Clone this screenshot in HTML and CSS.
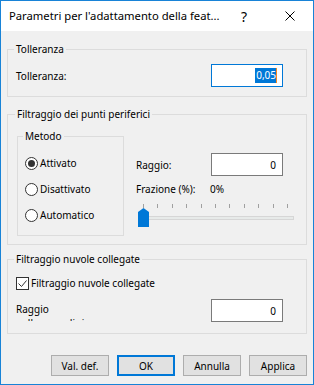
FILE: index.html
```html
<!DOCTYPE html>
<html lang="it">
<head>
    <meta charset="UTF-8">
    <title>Parametri per l'adattamento della feature</title>
    <link rel="stylesheet" href="styles.css">
</head>
<body>
    <div class="window">
        <div class="titlebar">
            <span class="title">Parametri per l'adattamento della feat...</span>
            <span class="caption-btn help">?</span>
            <span class="caption-btn close">
                <svg width="10" height="10" viewBox="0 0 10 10"><path d="M0.5 0.5L9.5 9.5M9.5 0.5L0.5 9.5" stroke="#000" stroke-width="1" fill="none"/></svg>
            </span>
        </div>

        <div class="content">
            <!-- Tolleranza -->
            <fieldset class="group group-tol">
                <legend>Tolleranza</legend>
                <div class="row">
                    <span class="label">Tolleranza:</span>
                    <div class="field focused"><span class="sel">0,05</span><span class="caret"></span></div>
                </div>
            </fieldset>

            <!-- Punti periferici -->
            <fieldset class="group group-outlier">
                <legend>Filtraggio dei punti periferici</legend>
                <div class="split">
                    <fieldset class="group group-method">
                        <legend>Metodo</legend>
                        <div class="radio checked"><span class="radio-circle"></span>Attivato</div>
                        <div class="radio"><span class="radio-circle"></span>Disattivato</div>
                        <div class="radio"><span class="radio-circle"></span>Automatico</div>
                    </fieldset>
                    <div class="right-col">
                        <div class="row">
                            <span class="label">Raggio:</span>
                            <div class="field">0</div>
                        </div>
                        <div class="fraction">
                            <span class="fraction-label">Frazione (%):</span>
                            <span>0%</span>
                        </div>
                        <div class="slider">
                            <div class="ticks">
                                <span></span><span></span><span></span><span></span><span></span><span></span>
                                <span></span><span></span><span></span><span></span><span></span>
                            </div>
                            <div class="track"></div>
                            <svg class="thumb" width="11" height="19" viewBox="0 0 11 19"><polygon points="0,4 5.5,0 11,4 11,19 0,19" fill="#0078d7"/></svg>
                        </div>
                    </div>
                </div>
            </fieldset>

            <!-- Nuvole collegate -->
            <fieldset class="group group-clouds">
                <legend>Filtraggio nuvole collegate</legend>
                <div class="check">
                    <span class="check-box">
                        <svg width="11" height="11" viewBox="0 0 11 11"><path d="M1.5 5.5L4.5 8.5L9.5 2.5" stroke="#333" stroke-width="1" fill="none"/></svg>
                    </span>
                    Filtraggio nuvole collegate
                </div>
                <div class="row row-top">
                    <span class="label clipped">Raggio<br>nella zona di ricerca</span>
                    <div class="field">0</div>
                </div>
            </fieldset>
        </div>

        <div class="buttons">
            <button>Val. def.</button>
            <button class="default">OK</button>
            <button>Annulla</button>
            <button>Applica</button>
        </div>
    </div>
</body>
</html>
```

FILE: styles.css
```css
* {
    box-sizing: border-box;
}

body {
    margin: 0;
    font-family: "Noto Sans", sans-serif;
    font-size: 10px;
    color: #000;
}

.window {
    width: 314px;
    height: 385px;
    border: 1px solid #1883d7;
    background-color: #f0f0f0;
    display: flex;
    flex-direction: column;
}

.titlebar {
    height: 30px;
    background-color: #fff;
    display: flex;
    align-items: center;
}

.title {
    flex: 1;
    min-width: 0;
    padding-left: 8px;
    font-size: 11.25px;
    line-height: 16px;
    white-space: nowrap;
    overflow: hidden;
}

.caption-btn {
    flex-shrink: 0;
    width: 46px;
    height: 30px;
    display: flex;
    align-items: center;
    justify-content: center;
}

.help {
    font-size: 14px;
}

.content {
    padding: 10px 6px 0 6px;
}

.group {
    margin: 0;
    border: 1px solid #dcdcdc;
    min-width: 0;
}

.group legend {
    margin-left: -2px;
    padding: 0 2px;
    line-height: 16px;
}

.group-tol {
    padding: 7px 23px 9px 8px;
}

.group-outlier {
    margin-top: 9px;
    padding: 6px 10px 8px 9px;
}

.group-clouds {
    margin-top: 6px;
    padding: 8px 23px 11px 8px;
}

.row {
    display: flex;
    align-items: center;
    justify-content: space-between;
}

.row-top {
    align-items: flex-start;
    margin-top: 8px;
}

.label {
    line-height: 16px;
}

.clipped {
    margin-top: 3px;
    height: 19px;
    line-height: 14px;
    overflow: hidden;
}

.field {
    width: 72px;
    height: 23px;
    border: 1px solid #7a7a7a;
    background-color: #fff;
    display: flex;
    align-items: center;
    justify-content: flex-end;
    padding-right: 6px;
    line-height: 16px;
}

.field.focused {
    border-color: #0078d7;
    padding-right: 5px;
}

.sel {
    background-color: #0078d7;
    color: #fff;
    line-height: 15px;
    padding-left: 1px;
}

.caret {
    width: 1px;
    height: 15px;
    background-color: #f7891f;
}

/* Metodo */
.split {
    display: flex;
}

.group-method {
    width: 107px;
    padding: 11px 7px 12px 7px;
}

.radio {
    display: flex;
    align-items: center;
    height: 16px;
    gap: 2px;
    margin-bottom: 10px;
}

.radio:last-child {
    margin-bottom: 0;
}

.radio-circle {
    width: 13px;
    height: 13px;
    border: 1px solid #333;
    border-radius: 50%;
    background-color: #fff;
    display: flex;
    align-items: center;
    justify-content: center;
}

.radio.checked .radio-circle::after {
    content: "";
    width: 7px;
    height: 7px;
    border-radius: 50%;
    background-color: #333;
}

.right-col {
    flex: 1;
    margin-left: 12px;
    padding-top: 25px;
}

.right-col .field {
    margin-right: 13px;
}

.fraction {
    display: flex;
    margin-top: 5px;
    line-height: 16px;
}

.fraction-label {
    width: 74px;
}

/* Slider */
.slider {
    position: relative;
    margin-top: 7px;
    height: 24px;
}

.ticks {
    display: flex;
    justify-content: space-between;
    margin-left: 7px;
    width: 145px;
}

.ticks span {
    width: 1px;
    height: 4px;
    background-color: #a0a0a0;
}

.track {
    margin-top: 8px;
    margin-left: 2px;
    width: 156px;
    height: 4px;
    border: 1px solid #d6d6d6;
    background-color: #e7eae9;
}

.thumb {
    position: absolute;
    left: 2px;
    top: 4px;
}

/* Checkbox */
.check {
    display: flex;
    align-items: center;
    height: 16px;
    gap: 2px;
}

.check-box {
    width: 13px;
    height: 13px;
    border: 1px solid #333;
    background-color: #fff;
    display: flex;
}

/* Buttons */
.buttons {
    display: flex;
    justify-content: flex-end;
    gap: 8px;
    padding: 21px 6px 0 6px;
}

button {
    width: 58px;
    height: 21px;
    border: 1px solid #adadad;
    background-color: #e1e1e1;
    font-family: "Noto Sans", sans-serif;
    font-size: 10px;
    color: #000;
    padding: 0;
}

button.default {
    border: 2px solid #0078d7;
}
```
